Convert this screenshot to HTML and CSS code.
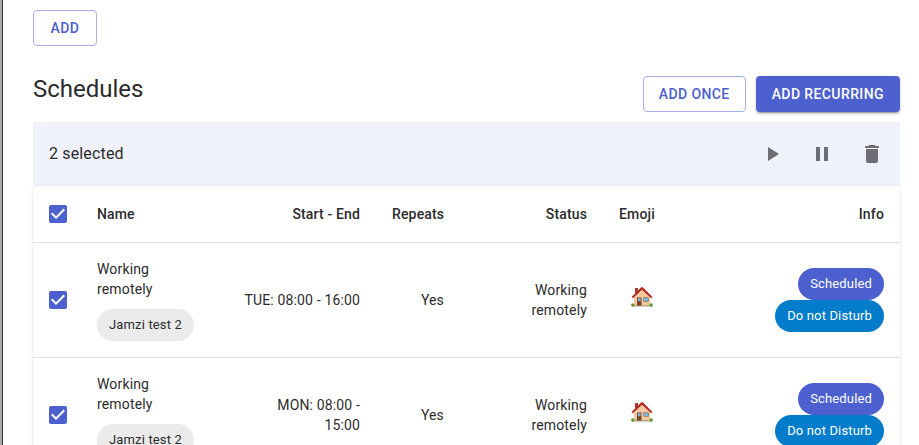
FILE: index.html
```html
<!DOCTYPE html>
<html lang="en">
<head>
<meta charset="utf-8">
<title>Schedules</title>
<link rel="stylesheet" href="styles.css">
</head>
<body>
<svg class="defs" width="0" height="0" aria-hidden="true">
  <symbol id="check" viewBox="0 0 24 24"><path d="M19 3H5c-1.11 0-2 .9-2 2v14c0 1.1.89 2 2 2h14c1.11 0 2-.9 2-2V5c0-1.1-.89-2-2-2zm-9 14l-5-5 1.41-1.41L10 14.17l7.59-7.59L19 8l-9 9z"/></symbol>
  <symbol id="house" viewBox="0 0 24 24">
    <rect x="5" y="3" width="3" height="5" fill="#a83a2c"/>
    <path d="M4 11.500 12 4l8 7.500V21H4z" fill="#f2c9a0"/>
    <path d="M1.500 12 11 2.600a1.400 1.400 0 0 1 2 0L22.500 12l-1.300 1.200L12 4.800 2.800 13.200z" fill="#b5281f"/>
    <rect x="7" y="12.500" width="4.500" height="8.500" fill="#7a4326"/>
    <rect x="7.800" y="13.300" width="2.900" height="3" fill="#7fb0d8"/>
    <rect x="13.500" y="12.500" width="5" height="4" fill="#6a4a35"/>
    <rect x="14" y="13" width="4" height="3" fill="#75b4e0"/>
    <rect x="2" y="20.400" width="20" height="1" fill="#9c8f70"/>
    <circle cx="2.800" cy="20" r="1.700" fill="#5f9a37"/>
    <circle cx="21.200" cy="20" r="1.700" fill="#5f9a37"/>
  </symbol>
</svg>
<main class="page">
  <div class="top-actions">
    <button class="btn btn-outline btn-add">ADD</button>
  </div>
  <header class="section-head">
    <h2 class="section-title">Schedules</h2>
    <div class="head-actions">
      <button class="btn btn-outline">ADD ONCE</button>
      <button class="btn btn-solid">ADD RECURRING</button>
    </div>
  </header>
  <div class="toolbar">
    <span class="toolbar-label">2 selected</span>
    <div class="toolbar-icons">
      <svg class="tool-icon" viewBox="0 0 24 24"><path d="M8 5v14l11-7z"/></svg>
      <svg class="tool-icon" viewBox="0 0 24 24"><path d="M6 19h4V5H6v14zm8-14v14h4V5h-4z"/></svg>
      <svg class="tool-icon" viewBox="0 0 24 24"><path d="M6 19c0 1.100.9 2 2 2h8c1.100 0 2-.9 2-2V7H6v12zM19 4h-3.500l-1-1h-5l-1 1H5v2h14V4z"/></svg>
    </div>
  </div>
  <div class="card">
    <table class="table">
      <colgroup>
        <col class="col-check"><col class="col-name"><col class="col-time"><col class="col-repeat"><col class="col-status"><col class="col-emoji"><col>
      </colgroup>
      <thead>
        <tr>
          <th class="cell-check"><svg class="checkbox"><use href="#check"/></svg></th>
          <th>Name</th>
          <th class="right">Start - End</th>
          <th class="right">Repeats</th>
          <th class="right">Status</th>
          <th>Emoji</th>
          <th class="right">Info</th>
        </tr>
      </thead>
      <tbody>
        <tr>
          <td class="cell-check"><svg class="checkbox"><use href="#check"/></svg></td>
          <td class="cell-name">Working remotely<span class="chip chip-grey">Jamzi test 2</span></td>
          <td class="right cell-time">TUE: 08:00 - 16:00</td>
          <td class="right">Yes</td>
          <td class="right">Working<br>remotely</td>
          <td class="cell-emoji"><svg class="emoji" role="img" aria-label="house"><use href="#house"/></svg></td>
          <td class="right"><div class="chips"><span class="chip chip-primary">Scheduled</span><span class="chip chip-blue">Do not Disturb</span></div></td>
        </tr>
        <tr>
          <td class="cell-check"><svg class="checkbox"><use href="#check"/></svg></td>
          <td class="cell-name">Working remotely<span class="chip chip-grey">Jamzi test 2</span></td>
          <td class="right cell-time">MON: 08:00 - 15:00</td>
          <td class="right">Yes</td>
          <td class="right">Working<br>remotely</td>
          <td class="cell-emoji"><svg class="emoji" role="img" aria-label="house"><use href="#house"/></svg></td>
          <td class="right"><div class="chips"><span class="chip chip-primary">Scheduled</span><span class="chip chip-blue">Do not Disturb</span></div></td>
        </tr>
      </tbody>
    </table>
  </div>
</main>
</body>
</html>
```
FILE: styles.css
```css
* { box-sizing: border-box; }
html, body { margin: 0; height: 100%; overflow: hidden; background: #fff; }
body { font-family: Roboto, "Liberation Sans", sans-serif; color: #2b2b2b; }
.defs { position: absolute; }
.page {
  height: 445px;
  margin-left: 2px;
  padding: 10px 19px 0 30px;
  border-left: 1px solid #333;
  box-shadow: -2px 0 0 #a9a9a9;
  overflow: hidden;
}
.top-actions { display: flex; }
.btn {
  height: 36px;
  padding: 0 15px;
  border-radius: 4px;
  font-family: inherit;
  font-size: 14px;
  font-weight: 500;
  letter-spacing: 0.4px;
  line-height: 1;
}
.btn-add { width: 64px; padding-bottom: 1px; }
.btn-outline { background: #fff; color: #4c60d0; border: 1px solid #a5afe8; }
.btn-solid {
  background: #4c60d0;
  color: #fff;
  border: 0;
  padding: 0 16px;
  box-shadow: 0 3px 1px -2px rgba(0,0,0,.2), 0 2px 2px 0 rgba(0,0,0,.14), 0 1px 5px 0 rgba(0,0,0,.12);
}
.section-head {
  display: flex;
  justify-content: space-between;
  align-items: flex-start;
  margin-top: 30px;
}
.section-title { margin: 0; font-size: 24px; font-weight: 400; line-height: 26px; }
.head-actions { display: flex; gap: 10px; }
.toolbar {
  display: flex;
  justify-content: space-between;
  align-items: center;
  height: 64px;
  margin-top: 10px;
  padding: 0 16px;
  background: #eff2fb;
}
.toolbar-label { margin-bottom: 2px; font-size: 16px; letter-spacing: 0.15px; }
.toolbar-icons { display: flex; gap: 26px; }
.tool-icon { width: 24px; height: 24px; fill: #6c6d75; display: block; }
.card {
  background: #fff;
  border-radius: 4px;
  box-shadow: 0 2px 1px -1px rgba(0,0,0,.2), 0 1px 1px 0 rgba(0,0,0,.14), 0 1px 3px 0 rgba(0,0,0,.12);
}
.table {
  width: 100%;
  table-layout: fixed;
  border-collapse: collapse;
  font-size: 14px;
  line-height: 20px;
  letter-spacing: 0.15px;
}
.col-check { width: 48px; }
.col-name { width: 148px; }
.col-time { width: 147px; }
.col-repeat { width: 84px; }
.col-status { width: 143px; }
.col-emoji { width: 120px; }
th, td {
  padding: 16px;
  text-align: left;
  vertical-align: middle;
  border-bottom: 1px solid #e0e0e0;
}
th { height: 56px; padding-top: 0; padding-bottom: 0; font-weight: 500; }
.right { text-align: right; }
.cell-check { padding: 0 0 0 13px; }
.cell-name { padding-right: 32px; }
.cell-time { padding-left: 12px; }
.cell-emoji { padding-left: 27px; }
.checkbox { display: block; width: 24px; height: 24px; fill: #4c60d0; }
.chip {
  display: inline-flex;
  align-items: center;
  height: 32px;
  padding: 0 12px;
  border-radius: 16px;
  font-size: 13px;
  letter-spacing: 0.15px;
  white-space: nowrap;
}
.chip-grey { display: flex; width: max-content; margin-top: 10px; background: #ebebeb; }
.chip-primary { background: #4c60d0; color: #fff; }
.chip-blue { background: #047ccc; color: #fff; }
.chips { display: flex; flex-direction: column; align-items: flex-end; }
.emoji { display: block; width: 24px; height: 24px; margin-bottom: 5px; }
```
